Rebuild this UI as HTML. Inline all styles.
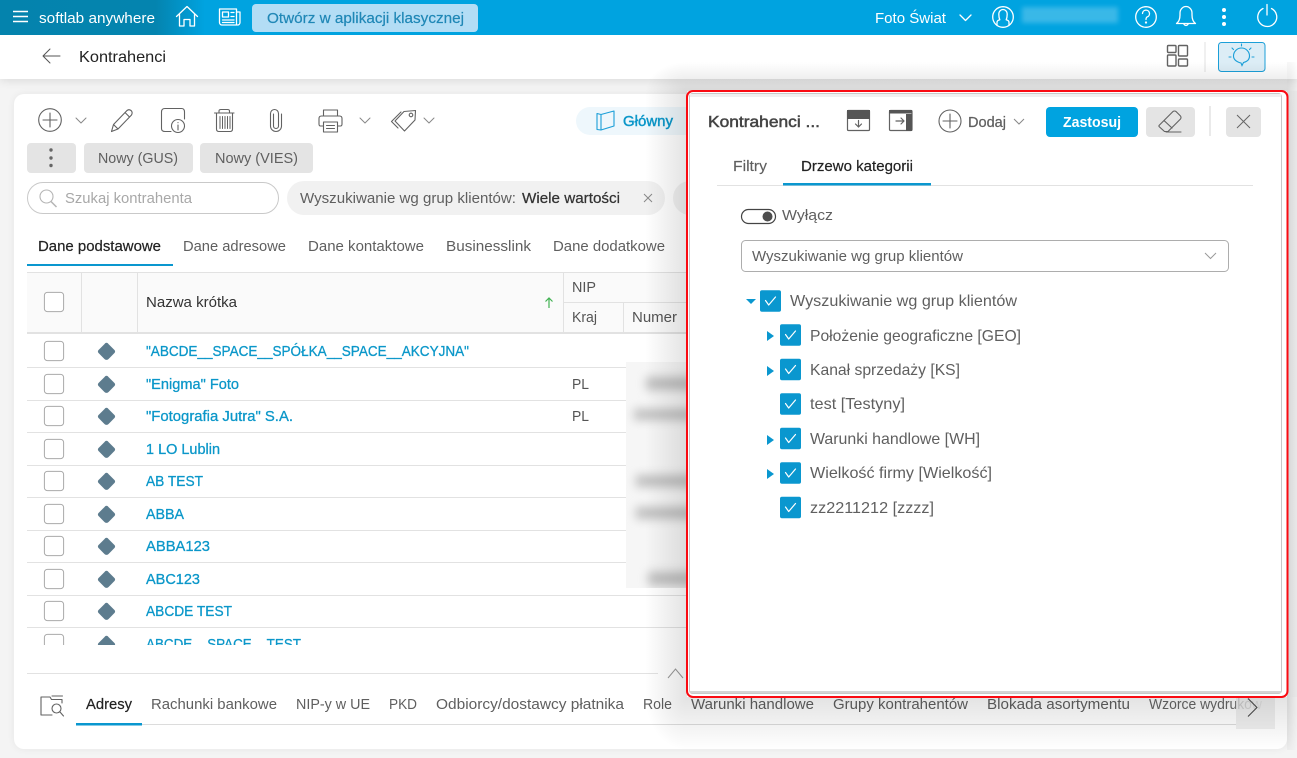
<!DOCTYPE html>
<html lang="pl"><head><meta charset="utf-8"><title>Kontrahenci</title>
<style>
html,body{margin:0;padding:0;width:1297px;height:758px;overflow:hidden;background:#f4f4f4}
svg{display:block}
text{font-family:"Liberation Sans",sans-serif;font-size:15px;fill:#5f5f5f}
.k{fill:#222}
.n{fill:#0b97c9;stroke:#0b97c9;stroke-width:.3}
.t{fill:#555}
.ic{fill:none;stroke:#626262;stroke-width:1.1;stroke-linecap:round;stroke-linejoin:round}
.wi{fill:none;stroke:#fff;stroke-width:1.3;stroke-linecap:round;stroke-linejoin:round}
.ln{stroke:#e2e2e2;stroke-width:1}
</style></head><body>
<svg width="1297" height="758" viewBox="0 0 1297 758" xmlns="http://www.w3.org/2000/svg">
<defs>
<filter id="b3" x="-30%" y="-60%" width="160%" height="220%"><feGaussianBlur stdDeviation="2.5"/></filter>
<filter id="b2" x="-30%" y="-30%" width="160%" height="160%"><feGaussianBlur stdDeviation="5"/></filter>
<filter id="s2" x="-20%" y="-100%" width="140%" height="300%"><feGaussianBlur stdDeviation="5"/></filter>
<filter id="s3" x="-5%" y="-5%" width="110%" height="110%"><feGaussianBlur stdDeviation="4"/></filter>
<linearGradient id="lg" x1="0" x2="1" y1="0" y2="0"><stop offset="0" stop-color="#0483ad"/><stop offset=".76" stop-color="#0484af"/><stop offset="1" stop-color="#00a3e0"/></linearGradient>
<linearGradient id="fade" gradientUnits="userSpaceOnUse" x1="1149" x2="1262" y1="0" y2="0"><stop offset="0" stop-color="#666"/><stop offset=".72" stop-color="#666"/><stop offset="1" stop-color="#ccc"/></linearGradient>
<linearGradient id="shL" x1="0" x2="1" y1="0" y2="0"><stop offset="0" stop-color="#000" stop-opacity="0"/><stop offset="1" stop-color="#000" stop-opacity=".11"/></linearGradient>
<linearGradient id="shR" x1="0" x2="1" y1="0" y2="0"><stop offset="0" stop-color="#000" stop-opacity=".11"/><stop offset="1" stop-color="#000" stop-opacity=".05"/></linearGradient>
<linearGradient id="shB" x1="0" x2="0" y1="0" y2="1"><stop offset="0" stop-color="#000" stop-opacity=".11"/><stop offset="1" stop-color="#000" stop-opacity="0"/></linearGradient>
<linearGradient id="shT" x1="0" x2="0" y1="0" y2="1"><stop offset="0" stop-color="#000" stop-opacity="0"/><stop offset="1" stop-color="#000" stop-opacity=".11"/></linearGradient>
<radialGradient id="cTL" cx="1" cy="1" r="1"><stop offset="0" stop-color="#000" stop-opacity=".11"/><stop offset="1" stop-color="#000" stop-opacity="0"/></radialGradient>
<radialGradient id="cBL" cx="1" cy="0" r="1"><stop offset="0" stop-color="#000" stop-opacity=".11"/><stop offset="1" stop-color="#000" stop-opacity="0"/></radialGradient>
<radialGradient id="cTR" cx="0" cy="1" r="1.4"><stop offset="0" stop-color="#000" stop-opacity=".11"/><stop offset="1" stop-color="#000" stop-opacity="0"/></radialGradient>
<radialGradient id="cBR" cx="0" cy="0" r="1.4"><stop offset="0" stop-color="#000" stop-opacity=".11"/><stop offset="1" stop-color="#000" stop-opacity="0"/></radialGradient>
<clipPath id="rows"><rect x="20" y="334" width="670" height="311"/></clipPath>
<g id="cb"><rect x="-9.6" y="-9.6" width="19.2" height="19.2" rx="3" fill="#fff" stroke="#aaa"/></g>
<g id="di"><path d="M0-8.2Q.8-8.2 1.6-7.2L7.6-1.2Q8.6 0 7.6 1.2L1.6 7.2Q0 8.6-1.6 7.2L-7.6 1.2Q-8.6 0-7.6-1.2L-1.6-7.2Q-.8-8.2 0-8.2Z" fill="#5d7c8e" stroke="#5d7c8e" stroke-width="1"/></g>
<g id="tc"><rect x="-10.5" y="-10.8" width="21" height="21.6" rx="2" fill="#0a97cf"/><path d="M-5-.5L-1.8 4 5-4" fill="none" stroke="#fff" stroke-width="1.2" stroke-linecap="round" stroke-linejoin="round"/></g>
<g id="car"><path d="M0-5L7 0 0 5Z" fill="#0a97cf"/></g>
</defs>

<!-- page bg -->
<rect width="1297" height="758" fill="#f4f4f4"/>

<!-- card -->
<rect x="14" y="94" width="1273" height="655" rx="10" fill="#000" filter="url(#s3)" opacity=".06"/>
<rect x="14" y="94" width="1273" height="655" rx="10" fill="#fff"/>

<!-- top bars -->
<rect x="0" y="70" width="1297" height="10" fill="#000" opacity=".12" filter="url(#s2)"/>
<rect x="0" y="35" width="1297" height="44" fill="#fff"/>
<rect x="0" y="0" width="1297" height="35" fill="#00a3e0"/>
<rect x="0" y="0" width="205" height="35" fill="url(#lg)"/>

<!-- topbar content -->
<path d="M13 11.5H28M13 16.5H28M13 21.5H28" stroke="#fff" stroke-width="1.5" fill="none"/>
<text x="39" y="23" textLength="116" lengthAdjust="spacingAndGlyphs" style="fill:#fff">softlab anywhere</text>
<path class="wi" d="M176.500 16.500L187 6.500 197.500 16.500M179.500 14.500V26H184V19.500H190V26H194.500V14.500"/>
<g class="wi"><path d="M219.500 9H236.500V25H222A2.500 2.500 0 0 1 219.500 22.500Z"/><path d="M236.500 12H240V22.500A2.500 2.500 0 0 1 237.500 25"/><rect x="222.500" y="12" width="6" height="5"/><path d="M231 12.500H234M231 16.500H234M222.500 20H234M222.500 22.500H234"/></g>
<rect x="252" y="4" width="226" height="28" rx="4" fill="#b3ddf5"/>
<text x="267" y="23" textLength="197" lengthAdjust="spacingAndGlyphs" style="fill:#1f87b6;stroke:#1f87b6;stroke-width:.2">Otwórz w aplikacji klasycznej</text>
<text x="875" y="23" textLength="71" lengthAdjust="spacingAndGlyphs" style="fill:#fff">Foto Świat</text>
<path class="wi" d="M960 15L965.500 20.500 971 15"/>
<g class="wi"><circle cx="1003" cy="17" r="10.300"/><path d="M997 25.500V22.500Q997 20.500 999.800 19.800 998.800 17.500 998.800 14A4.200 4.500 0 0 1 1007.200 14Q1007.200 17.500 1006.200 19.800 1009 20.500 1009 22.500V25.500"/></g>
<rect x="1022" y="7" width="96" height="16" fill="#4dbfea" opacity=".75" filter="url(#b3)"/>
<g class="wi"><circle cx="1146" cy="17" r="10.300"/><path d="M1142.500 13.500A3.500 3.500 0 1 1 1147 17Q1146 17.700 1146 19.500"/><circle cx="1146" cy="22.500" r=".5"/></g>
<path class="wi" d="M1176.500 23.500Q1180 21 1180 15V13A6 6.500 0 0 1 1192 13V15Q1192 21 1195.500 23.500ZM1183.500 23.500Q1186 27.500 1188.500 23.500"/>
<g fill="#fff"><circle cx="1224" cy="10" r="2"/><circle cx="1224" cy="17" r="2"/><circle cx="1224" cy="24" r="2"/></g>
<path class="wi" d="M1263 8.500A9.500 9.500 0 1 0 1271.500 8.500M1267 4.500V15"/>

<!-- second bar -->
<path d="M60 56H43M50 49L43 56 50 63" fill="none" stroke="#555" stroke-width="1" stroke-linecap="round" stroke-linejoin="round"/>
<text x="79" y="62" textLength="87" lengthAdjust="spacingAndGlyphs" class="k" style="font-size:16px">Kontrahenci</text>
<g class="ic" style="stroke-width:1.4"><rect x="1167.500" y="45.500" width="8.500" height="7" rx="1"/><rect x="1178.500" y="45.500" width="9" height="10.500" rx="1"/><rect x="1167.500" y="55" width="8.500" height="11" rx="1"/><rect x="1178.500" y="59" width="9" height="7" rx="1"/></g>
<path d="M1205 42V72" stroke="#e0e0e0"/>
<rect x="1218.500" y="42.500" width="46.500" height="29" rx="3" fill="#dcedf6" stroke="#1b9fd8"/>
<g fill="none" stroke="#1b9fd8" stroke-width="1.100" stroke-linecap="round"><path d="M1242 65.500L1241 63Q1233.500 61 1233.500 56A8 8 0 0 1 1249.500 56Q1249.500 61 1243.500 62.500Z"/><path d="M1241.500 44V46M1232 48L1233.500 49.500M1251 48L1249.500 49.500M1229 57H1231M1252 57H1254"/></g>

<!-- toolbar -->
<g class="ic">
<circle cx="50" cy="120" r="11.300"/><path d="M43 120H57M50 113V127"/>
<path d="M76 118L81 123 86 118" stroke-width="1" stroke="#888"/>
<path d="M111.500 131.500L113.500 124.500 127 110.500Q129 109 131 110.500T131.500 115L118 129ZM113.500 124.500L118 129M125 112.500L129.500 117"/>
<path d="M171 131.500H165Q161.500 131.500 161.500 128.500V112Q161.500 108.500 165 108.500H181.500Q184.500 108.500 184.500 112V119"/>
<circle cx="178" cy="126" r="6.500"/><path d="M178 125V130M178 122.500V122.700"/>
<path d="M214.500 113H234M219 113V111Q219 109.500 221 109.500H227.500Q229.500 109.500 229.500 111V113"/>
<path d="M216.500 113V129Q216.500 131.500 219 131.500H230Q232.500 131.500 232.500 129V113"/>
<path d="M220 116.500V128.500M222.500 116.500V128.500M225 116.500V128.500M227.500 116.500V128.500M230 116.500V128.500" stroke-width="1"/>
<path d="M273.500 114V126A2.500 2.500 0 0 0 278.500 126V113.500A4 4 0 0 0 270.500 113.500V126A5.500 5.500 0 0 0 281.500 126V114"/>
<path d="M323.500 116V110H337.500V116M323 126H320.500Q319 126 319 124V118.500Q319 116 321.500 116H339.500Q342 116 342 118.500V124Q342 126 340.500 126H338"/><rect x="323.500" y="122" width="14" height="10"/><path d="M326.500 125.500H334.500M326.500 128.500H334.500"/>
<path d="M360 118L365 123 370 118" stroke-width="1" stroke="#888"/>
<path d="M404 111.500L415.500 110.500 415 120 404.500 131 395 121ZM398 128L391.500 121.500 401 112"/><circle cx="411" cy="115" r="1.800"/>
<path d="M424 118L429 123 434 118" stroke-width="1" stroke="#888"/>
</g>
<rect x="576" y="107" width="130" height="28" rx="14" fill="#eef7fc"/>
<path d="M601 114.500L614 111V126L601 130ZM601 114.500L597 113.500V129.500L601 130" fill="none" stroke="#1b9fd8" stroke-width="1.100" stroke-linejoin="round"/>
<text x="623" y="126" textLength="50" lengthAdjust="spacingAndGlyphs" style="fill:#0b97c9;stroke:#0b97c9;stroke-width:.45">Główny</text>

<!-- action buttons -->
<rect x="27" y="143" width="49" height="30" rx="4" fill="#e4e4e4"/>
<g fill="#666"><circle cx="51" cy="150" r="1.700"/><circle cx="51" cy="158" r="1.700"/><circle cx="51" cy="165.500" r="1.700"/></g>
<rect x="84" y="143" width="109" height="30" rx="4" fill="#e4e4e4"/>
<text x="98" y="163" textLength="80" lengthAdjust="spacingAndGlyphs">Nowy (GUS)</text>
<rect x="200" y="143" width="113" height="30" rx="4" fill="#e4e4e4"/>
<text x="215" y="163" textLength="83" lengthAdjust="spacingAndGlyphs">Nowy (VIES)</text>

<!-- search -->
<rect x="27.500" y="182.500" width="251" height="31" rx="15.500" fill="#fff" stroke="#c9c9c9"/>
<circle cx="46.500" cy="196.500" r="6.500" fill="none" stroke="#b5b5b5" stroke-width="1.100"/><path d="M51 201.500L56.500 207" stroke="#b5b5b5" stroke-width="1.500"/>
<text x="65" y="203" textLength="127" lengthAdjust="spacingAndGlyphs" style="fill:#a8a8a8">Szukaj kontrahenta</text>
<rect x="287" y="181" width="378" height="34" rx="17" fill="#f1f1f1"/>
<text x="300" y="203" textLength="216" lengthAdjust="spacingAndGlyphs">Wyszukiwanie wg grup klientów:</text>
<text x="522" y="203" textLength="98" lengthAdjust="spacingAndGlyphs" style="fill:#333;stroke:#333;stroke-width:.25">Wiele wartości</text>
<path d="M644 194L652 202M652 194L644 202" stroke="#888" fill="none"/>
<rect x="673" y="181" width="60" height="34" rx="17" fill="#f1f1f1"/>

<!-- tabs -->
<text x="38" y="251" textLength="123" lengthAdjust="spacingAndGlyphs" class="k" style="stroke:#222;stroke-width:.2">Dane podstawowe</text>
<text x="183" y="251" textLength="103" lengthAdjust="spacingAndGlyphs">Dane adresowe</text>
<text x="308" y="251" textLength="116" lengthAdjust="spacingAndGlyphs">Dane kontaktowe</text>
<text x="446" y="251" textLength="85" lengthAdjust="spacingAndGlyphs">Businesslink</text>
<text x="553" y="251" textLength="112" lengthAdjust="spacingAndGlyphs">Dane dodatkowe</text>
<rect x="27" y="264" width="146" height="2" fill="#0a97cf"/>

<!-- table header -->
<rect x="27" y="273" width="665" height="60" fill="#fafafa"/>
<path d="M27 272.500H692" class="ln"/>
<rect x="27" y="332" width="665" height="2" fill="#e2e2e2"/>
<path d="M81.500 273V332M137.500 273V332M563.500 273V332M623.500 303V332M563 302.500H692" class="ln"/>
<use href="#cb" x="54" y="302"/>
<text x="146" y="307" textLength="91" lengthAdjust="spacingAndGlyphs" class="k" style="fill:#333">Nazwa krótka</text>
<path d="M549 308V298M545.500 301.500L549 298 552.500 301.500" fill="none" stroke="#41b252" stroke-width="1.200"/>
<text x="572" y="292" textLength="24" lengthAdjust="spacingAndGlyphs" class="t">NIP</text>
<text x="572" y="322" textLength="25" lengthAdjust="spacingAndGlyphs" class="t">Kraj</text>
<text x="632" y="322" textLength="45" lengthAdjust="spacingAndGlyphs" class="t">Numer</text>

<!-- rows -->
<g clip-path="url(#rows)">
<path class="ln" d="M27 367.500H690M27 400.500H690M27 432.500H690M27 465.500H690M27 497.500H690M27 530.500H690M27 562.500H690M27 595.500H690M27 627.500H690"/>
<use href="#cb" x="54" y="351"/><use href="#di" x="106.500" y="351.500"/>
<use href="#cb" x="54" y="384"/><use href="#di" x="106.500" y="384.500"/>
<use href="#cb" x="54" y="416"/><use href="#di" x="106.500" y="416.500"/>
<use href="#cb" x="54" y="449"/><use href="#di" x="106.500" y="449.500"/>
<use href="#cb" x="54" y="481"/><use href="#di" x="106.500" y="481.500"/>
<use href="#cb" x="54" y="514"/><use href="#di" x="106.500" y="514.500"/>
<use href="#cb" x="54" y="546"/><use href="#di" x="106.500" y="546.500"/>
<use href="#cb" x="54" y="579"/><use href="#di" x="106.500" y="579.500"/>
<use href="#cb" x="54" y="611"/><use href="#di" x="106.500" y="611.500"/>
<use href="#cb" x="54" y="644"/><use href="#di" x="106.500" y="644.500"/>
<text class="n" x="146" y="356" textLength="323" lengthAdjust="spacingAndGlyphs">"ABCDE__SPACE__SPÓŁKA__SPACE__AKCYJNA"</text>
<text class="n" x="146" y="389" textLength="93" lengthAdjust="spacingAndGlyphs">"Enigma" Foto</text>
<text class="n" x="146" y="421" textLength="147" lengthAdjust="spacingAndGlyphs">"Fotografia Jutra" S.A.</text>
<text class="n" x="146" y="454" textLength="74" lengthAdjust="spacingAndGlyphs">1 LO Lublin</text>
<text class="n" x="146" y="486" textLength="57" lengthAdjust="spacingAndGlyphs">AB TEST</text>
<text class="n" x="146" y="519" textLength="38" lengthAdjust="spacingAndGlyphs">ABBA</text>
<text class="n" x="146" y="551" textLength="64" lengthAdjust="spacingAndGlyphs">ABBA123</text>
<text class="n" x="146" y="584" textLength="54" lengthAdjust="spacingAndGlyphs">ABC123</text>
<text class="n" x="146" y="616" textLength="86" lengthAdjust="spacingAndGlyphs">ABCDE TEST</text>
<text class="n" x="146" y="649" textLength="155" lengthAdjust="spacingAndGlyphs">ABCDE__SPACE__TEST</text>
<text class="t" x="572" y="389" textLength="17" lengthAdjust="spacingAndGlyphs">PL</text>
<text class="t" x="572" y="421" textLength="17" lengthAdjust="spacingAndGlyphs">PL</text>
</g>
<!-- blurred numbers -->
<svg x="626" y="362" width="62" height="226" viewBox="626 362 62 226">
<rect x="626" y="362" width="62" height="226" fill="#f6f6f6"/>
<g fill="#8f8f8f" filter="url(#b2)" opacity=".55"><rect x="646" y="377" width="50" height="13"/><rect x="634" y="409" width="60" height="11"/><rect x="636" y="475" width="60" height="12"/><rect x="636" y="507" width="60" height="12"/><rect x="648" y="572" width="50" height="13"/></g>
</svg>

<!-- splitter -->
<path class="ln" d="M27 673.500H658"/>
<path d="M668 678L675.500 669 683 678" fill="none" stroke="#999" stroke-width="1"/>

<!-- bottom tabs -->
<g class="ic" style="stroke-width:1.1"><path d="M52 715H41V697H50L51.500 699.500H62V703M52 696H62.500"/><circle cx="56.500" cy="708.500" r="4.500"/><path d="M60 712L63.500 716"/></g>
<text x="86" y="709" textLength="46" lengthAdjust="spacingAndGlyphs" class="k" style="stroke:#222;stroke-width:.2">Adresy</text>
<text x="151" y="709" textLength="126" lengthAdjust="spacingAndGlyphs">Rachunki bankowe</text>
<text x="296" y="709" textLength="74" lengthAdjust="spacingAndGlyphs">NIP-y w UE</text>
<text x="389" y="709" textLength="28" lengthAdjust="spacingAndGlyphs">PKD</text>
<text x="436" y="709" textLength="188" lengthAdjust="spacingAndGlyphs">Odbiorcy/dostawcy płatnika</text>
<text x="643" y="709" textLength="29" lengthAdjust="spacingAndGlyphs">Role</text>
<text x="691" y="709" textLength="123" lengthAdjust="spacingAndGlyphs">Warunki handlowe</text>
<text x="833" y="709" textLength="135" lengthAdjust="spacingAndGlyphs">Grupy kontrahentów</text>
<text x="987" y="709" textLength="143" lengthAdjust="spacingAndGlyphs">Blokada asortymentu</text>
<text x="1149" y="709" textLength="113" lengthAdjust="spacingAndGlyphs" style="fill:url(#fade)">Wzorce wydruków</text>
<path d="M76 724.500H1236" stroke="#dcdcdc"/>
<rect x="76" y="723" width="66" height="2.500" fill="#0a97cf"/>
<rect x="1236" y="697" width="39" height="32" fill="#e9e9e9" opacity=".72"/>
<path d="M1248 698.500L1257 707.500 1248 716.500" fill="none" stroke="#444" stroke-width="1"/>

<!-- panel shadow: four sides plus radial corners so it fades without hard edges -->
<rect x="645" y="91" width="42" height="606" fill="url(#shL)"/>
<rect x="687" y="697" width="600" height="53" fill="url(#shB)"/>
<rect x="1287" y="91" width="10" height="606" fill="url(#shR)"/>
<rect x="687" y="62" width="600" height="29" fill="url(#shT)"/>
<rect x="645" y="62" width="42" height="29" fill="url(#cTL)"/>
<rect x="645" y="697" width="42" height="53" fill="url(#cBL)"/>
<rect x="1287" y="62" width="10" height="29" fill="url(#cTR)"/>
<rect x="1287" y="697" width="10" height="53" fill="url(#cBR)"/>

<!-- panel -->
<rect x="687" y="91" width="600.500" height="606" rx="6" fill="#fff" stroke="#fa0b12" stroke-width="2"/>
<rect x="689.500" y="93.500" width="592" height="600" rx="3" fill="#fff" stroke="#c8c8c8" stroke-width="1"/>
<rect x="690" y="94" width="591" height="3" fill="#f0f0f0"/>
<rect x="690" y="691" width="591" height="2" fill="#d4d4d4"/>

<!-- panel header -->
<text x="708" y="127" textLength="112" lengthAdjust="spacingAndGlyphs" style="font-size:16px;fill:#444;stroke:#444;stroke-width:.5">Kontrahenci ...</text>
<g class="ic" style="stroke-width:1.200"><rect x="847.500" y="110.500" width="22" height="20" rx="1"/><path d="M858.500 120.500V127M855.500 124L858.500 127 861.500 124"/></g>
<rect x="847" y="110" width="23" height="9" fill="#555"/>
<g class="ic" style="stroke-width:1.200"><rect x="889.500" y="110.500" width="22.500" height="20" rx="1"/><path d="M896 121H904M901 118L904 121 901 124"/></g>
<rect x="906" y="114" width="6" height="17" fill="#555"/><rect x="889" y="110" width="23" height="3.500" fill="#555"/>
<g class="ic"><circle cx="950" cy="121" r="11"/><path d="M943 121H957M950 114V128"/></g>
<text x="968" y="127" textLength="38" lengthAdjust="spacingAndGlyphs" style="stroke:#5f5f5f;stroke-width:.25">Dodaj</text>
<path d="M1014 119L1019 124 1024 119" fill="none" stroke="#888"/>
<rect x="1046" y="107" width="92" height="30" rx="4" fill="#00a3e0"/>
<text x="1063" y="127" textLength="58" lengthAdjust="spacingAndGlyphs" style="fill:#fff;font-weight:bold">Zastosuj</text>
<rect x="1146" y="107" width="49" height="30" rx="4" fill="#e4e4e4"/>
<path class="ic" d="M1159 125.500L1173 111.500Q1174.500 110.500 1176 111.500L1180.500 116Q1181.500 117.500 1180.500 119L1168 131.500H1164.500L1159 126.500ZM1164 120.500L1172 128M1166 132H1181"/>
<path d="M1210 106V136" stroke="#e2e2e2" stroke-width="1.500"/>
<rect x="1226" y="107" width="35" height="30" rx="4" fill="#e4e4e4"/>
<path d="M1237 115L1250 128M1250 115L1237 128" stroke="#666" fill="none" stroke-width="1"/>

<!-- panel tabs -->
<text x="733" y="171" textLength="34" lengthAdjust="spacingAndGlyphs" style="stroke:#5f5f5f;stroke-width:.15">Filtry</text>
<text x="801" y="171" textLength="112" lengthAdjust="spacingAndGlyphs" class="k" style="stroke:#222;stroke-width:.2">Drzewo kategorii</text>
<path d="M717 185.500H1253" class="ln"/>
<rect x="783" y="183" width="148" height="2.500" fill="#0a97cf"/>

<!-- toggle -->
<rect x="741.500" y="209.500" width="34" height="14" rx="7" fill="#fff" stroke="#444" stroke-width="1.200"/>
<circle cx="767.500" cy="216.500" r="5" fill="#4d4d4d"/>
<text x="782" y="220" textLength="51" lengthAdjust="spacingAndGlyphs">Wyłącz</text>

<!-- select -->
<rect x="741.500" y="240.500" width="487" height="31" rx="4" fill="#fff" stroke="#adadad"/>
<text x="752" y="261" textLength="211" lengthAdjust="spacingAndGlyphs">Wyszukiwanie wg grup klientów</text>
<path d="M1205 253L1210.500 258.500 1216 253" fill="none" stroke="#999"/>

<!-- tree -->
<path d="M746 299H756L751 304Z" fill="#0a97cf"/>
<use href="#tc" x="770.500" y="301"/>
<text x="790" y="306" textLength="227" lengthAdjust="spacingAndGlyphs" style="font-size:16px">Wyszukiwanie wg grup klientów</text>
<use href="#car" x="767" y="336"/><use href="#tc" x="790.500" y="335"/>
<text x="810" y="341" textLength="211" lengthAdjust="spacingAndGlyphs" style="font-size:16px">Położenie geograficzne [GEO]</text>
<use href="#car" x="767" y="371"/><use href="#tc" x="790.500" y="369.500"/>
<text x="810" y="375" textLength="150" lengthAdjust="spacingAndGlyphs" style="font-size:16px">Kanał sprzedaży [KS]</text>
<use href="#tc" x="790.500" y="404"/>
<text x="810" y="409" textLength="95" lengthAdjust="spacingAndGlyphs" style="font-size:16px">test [Testyny]</text>
<use href="#car" x="767" y="440"/><use href="#tc" x="790.500" y="438.500"/>
<text x="810" y="444" textLength="170" lengthAdjust="spacingAndGlyphs" style="font-size:16px">Warunki handlowe [WH]</text>
<use href="#car" x="767" y="474"/><use href="#tc" x="790.500" y="473"/>
<text x="810" y="478" textLength="182" lengthAdjust="spacingAndGlyphs" style="font-size:16px">Wielkość firmy [Wielkość]</text>
<use href="#tc" x="790.500" y="507.500"/>
<text x="810" y="513" textLength="124" lengthAdjust="spacingAndGlyphs" style="font-size:16px">zz2211212 [zzzz]</text>
</svg>
</body></html>
